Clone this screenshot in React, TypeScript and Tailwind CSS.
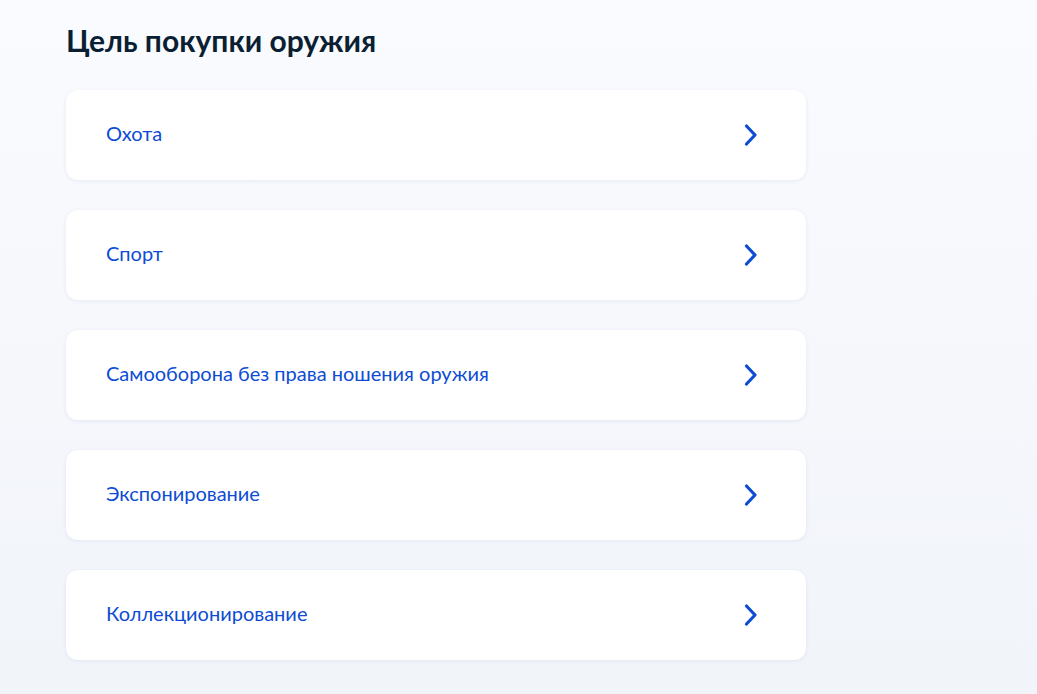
import React from "react";

const items = [
  "Охота",
  "Спорт",
  "Самооборона без права ношения оружия",
  "Экспонирование",
  "Коллекционирование",
];

function Chevron() {
  return (
    <svg width="14" height="24" viewBox="0 0 14 24" fill="none">
      <path d="M2.5 3l8.5 9-8.5 9" stroke="#0d4cd3" strokeWidth="3.2" strokeLinecap="round" strokeLinejoin="round" />
    </svg>
  );
}

export default function App() {
  return (
    <div
      className="min-h-[694px] w-full bg-gradient-to-b from-[#fafbfe] to-[#f1f4f9] pl-[66px] pt-[22px] pb-[34px]"
      style={{ fontFamily: "Lato, 'Noto Sans', sans-serif" }}
    >
      <h1 className="text-[30px] leading-[36px] font-bold text-[#0b1f33] mb-[32px]">Цель покупки оружия</h1>
      <div className="flex flex-col gap-[30px] w-[740px]">
        {items.map((t) => (
          <div
            key={t}
            className="h-[90px] bg-white rounded-[12px] shadow-[0_1px_4px_rgba(0,60,160,0.08)] flex items-center justify-between pl-[40px] pr-[48px]"
          >
            <span className="text-[20px] text-[#0d4cd3] leading-[24px] -mt-[4px]">{t}</span>
            <Chevron />
          </div>
        ))}
      </div>
    </div>
  );
}
